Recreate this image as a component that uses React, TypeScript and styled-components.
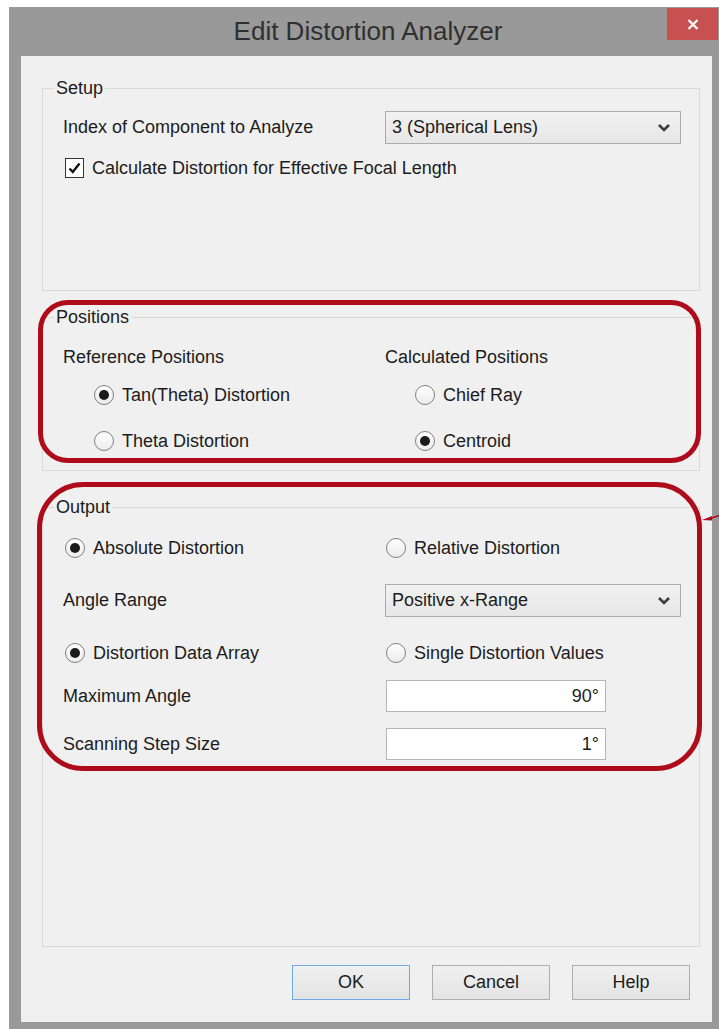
import React from "react";
import styled, { createGlobalStyle } from "styled-components";

const GlobalStyle = createGlobalStyle`
  html, body {
    margin: 0;
    padding: 0;
    background: #ffffff;
    overflow: hidden;
  }
  body {
    font-family: "Liberation Sans", Arial, sans-serif;
    font-size: 18px;
    color: #1c1c1c;
  }
`;

const Window = styled.div`
  margin: 7px 0 0 9px;
  width: 710px;
  height: 1022px;
  background: #999999;
  display: flex;
  flex-direction: column;
`;

const TitleBar = styled.div`
  height: 49px;
  display: grid;
  grid-template-columns: 1fr auto 1fr;
`;

const Title = styled.div`
  grid-column: 2;
  align-self: center;
  padding-left: 8px;
  font-size: 26px;
  color: #303030;
`;

const CloseButton = styled.div`
  grid-column: 3;
  justify-self: end;
  align-self: start;
  margin: 1px 1px 0 0;
  width: 51px;
  height: 32px;
  background: #c75050;
  display: flex;
  align-items: center;
  justify-content: center;
`;

const Body = styled.div`
  flex: 1;
  margin: 0 7px 7px 12px;
  background: #f0f0f0;
  padding: 32px 12px 0 21px;
  display: flex;
  flex-direction: column;
`;

const Group = styled.div<{ $height: number; $top?: number }>`
  position: relative;
  box-sizing: border-box;
  height: ${(p) => p.$height}px;
  margin-top: ${(p) => p.$top ?? 0}px;
  border: 1px solid #dadada;
  padding: 0 0 0 20px;
  display: flex;
  flex-direction: column;
`;

const Caption = styled.div`
  margin: -11px 0 0 -9px;
  padding: 0 2px;
  width: fit-content;
  height: 20px;
  line-height: 20px;
  background: #f0f0f0;
`;

const Row = styled.div<{ $height?: number; $top: number }>`
  display: grid;
  grid-template-columns: 322px 1fr;
  align-items: center;
  white-space: nowrap;
  height: ${(p) => p.$height ?? 24}px;
  margin-top: ${(p) => p.$top}px;
`;

const Option = styled.label<{ $indent: number }>`
  display: flex;
  align-items: center;
  gap: 8px;
  padding-left: ${(p) => p.$indent}px;
`;

const WideOption = styled(Option)`
  grid-column: 1 / -1;
`;

const RadioMark = styled.span<{ $checked?: boolean }>`
  box-sizing: border-box;
  width: 20px;
  height: 20px;
  border-radius: 50%;
  border: 1px solid #808080;
  background: linear-gradient(#ffffff, #ebebeb);
  display: inline-flex;
  align-items: center;
  justify-content: center;

  &::after {
    content: "";
    width: 10px;
    height: 10px;
    border-radius: 50%;
    background: ${(p) => (p.$checked ? "#1a1a1a" : "transparent")};
  }
`;

const CheckMark = styled.span`
  box-sizing: border-box;
  width: 19px;
  height: 20px;
  margin-left: 2px;
  border: 1px solid #333333;
  background: #ffffff;
  display: inline-flex;
  align-items: center;
  justify-content: center;
`;

const Combo = styled.div`
  box-sizing: border-box;
  width: 296px;
  height: 33px;
  border: 1px solid #acacac;
  background: linear-gradient(#f2f2f2, #e6e6e6);
  display: flex;
  align-items: center;
  justify-content: space-between;
  padding: 0 9px 0 6px;
`;

const NumberBox = styled.div`
  box-sizing: border-box;
  width: 220px;
  height: 32px;
  margin-left: 1px;
  border: 1px solid #b4b4b4;
  background: #ffffff;
  display: flex;
  align-items: center;
  justify-content: flex-end;
  padding-right: 6px;
`;

const Highlight = styled.div<{ $inset: string; $radius: number }>`
  position: absolute;
  inset: ${(p) => p.$inset};
  border: 5px solid #ae0b1b;
  border-radius: ${(p) => p.$radius}px;
  pointer-events: none;
`;

const Pointer = styled.svg`
  position: absolute;
  top: 2px;
  left: 656px;
  overflow: visible;
`;

const ButtonBar = styled.div`
  display: flex;
  justify-content: flex-end;
  gap: 22px;
  margin: 18px 10px 0 0;
`;

const Button = styled.div<{ $default?: boolean }>`
  box-sizing: border-box;
  width: 118px;
  height: 35px;
  border: 1px solid ${(p) => (p.$default ? "#6fa9e6" : "#adadad")};
  background: linear-gradient(#f0f0f0, #e3e3e3);
  display: flex;
  align-items: center;
  justify-content: center;
`;

const Chevron = () => (
  <svg width="14" height="9" viewBox="0 0 14 9">
    <path d="M2 2 L7 7 L12 2" fill="none" stroke="#3c3c3c" strokeWidth="2.6" />
  </svg>
);

const Radio = ({ label, checked, indent }: { label: string; checked?: boolean; indent: number }) => (
  <Option $indent={indent}>
    <RadioMark $checked={checked} />
    {label}
  </Option>
);

export default function App() {
  return (
    <>
      <GlobalStyle />
      <Window>
        <TitleBar>
          <Title>Edit Distortion Analyzer</Title>
          <CloseButton>
            <svg width="12" height="11" viewBox="0 0 12 11">
              <path d="M1.5 1 L10.5 10 M10.5 1 L1.5 10" stroke="#ffffff" strokeWidth="2.2" />
            </svg>
          </CloseButton>
        </TitleBar>
        <Body>
          <Group $height={203}>
            <Caption>Setup</Caption>
            <Row $height={33} $top={13}>
              <span>Index of Component to Analyze</span>
              <Combo>
                <span>3 (Spherical Lens)</span>
                <Chevron />
              </Combo>
            </Row>
            <Row $top={12}>
              <WideOption $indent={0}>
                <CheckMark>
                  <svg width="13" height="12" viewBox="0 0 13 12">
                    <path d="M1.5 6.5 L4.8 10 L11.5 1.5" fill="none" stroke="#111" strokeWidth="2.4" />
                  </svg>
                </CheckMark>
                Calculate Distortion for Effective Focal Length
              </WideOption>
            </Row>
          </Group>

          <Group $height={154} $top={26}>
            <Caption>Positions</Caption>
            <Row $top={18}>
              <span>Reference Positions</span>
              <span>Calculated Positions</span>
            </Row>
            <Row $top={14}>
              <Radio label="Tan(Theta) Distortion" checked indent={31} />
              <Radio label="Chief Ray" indent={30} />
            </Row>
            <Row $top={22}>
              <Radio label="Theta Distortion" indent={31} />
              <Radio label="Centroid" checked indent={30} />
            </Row>
            <Highlight $inset="-18px -2px 7px -5px" $radius={30} />
          </Group>

          <Group $height={440} $top={36}>
            <Caption>Output</Caption>
            <Row $top={19}>
              <Radio label="Absolute Distortion" checked indent={2} />
              <Radio label="Relative Distortion" indent={1} />
            </Row>
            <Row $height={33} $top={24}>
              <span>Angle Range</span>
              <Combo>
                <span>Positive x-Range</span>
                <Chevron />
              </Combo>
            </Row>
            <Row $top={24}>
              <Radio label="Distortion Data Array" checked indent={2} />
              <Radio label="Single Distortion Values" indent={1} />
            </Row>
            <Row $height={32} $top={15}>
              <span>Maximum Angle</span>
              <NumberBox>90°</NumberBox>
            </Row>
            <Row $height={32} $top={16}>
              <span>Scanning Step Size</span>
              <NumberBox>1°</NumberBox>
            </Row>
            <Highlight $inset="-26px -3px 175px -6px" $radius={46} />
            <Pointer width="22" height="14" viewBox="0 0 22 14">
              <polygon points="3,10 13,6 13,10.5" fill="#ae0b1b" />
              <path d="M12 8.2 L22 5" stroke="#ae0b1b" strokeWidth="1.6" />
            </Pointer>
          </Group>

          <ButtonBar>
            <Button $default>OK</Button>
            <Button>Cancel</Button>
            <Button>Help</Button>
          </ButtonBar>
        </Body>
      </Window>
    </>
  );
}
